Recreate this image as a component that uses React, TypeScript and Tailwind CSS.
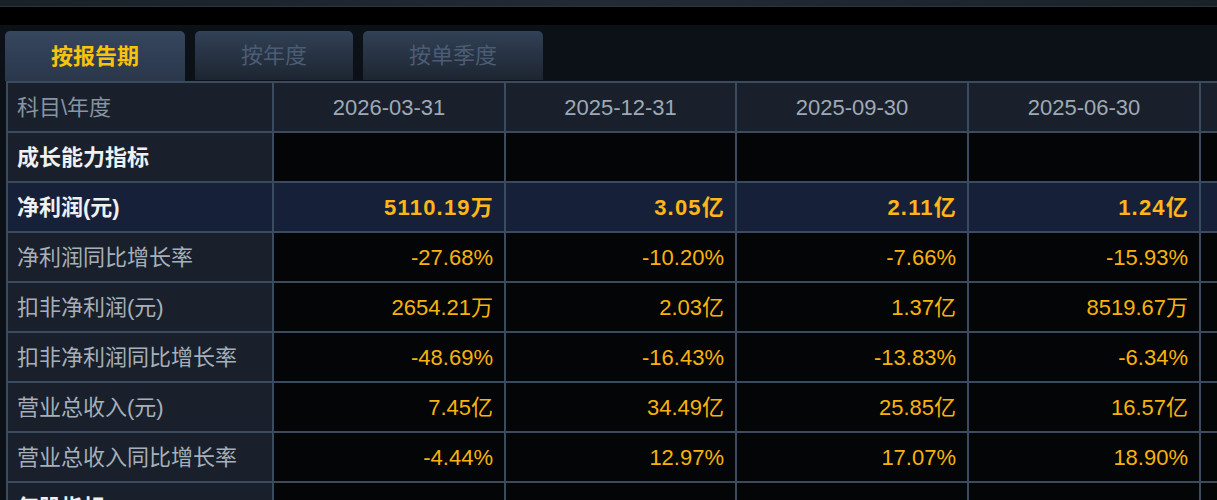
import React from "react";

const cols = [232, 231, 232, 232, 232];
const dates = ["2026-03-31", "2025-12-31", "2025-09-30", "2025-06-30", ""];

type Row = { label: string; kind: "section" | "hl" | "normal"; vals: string[] };

const rows: Row[] = [
  { label: "成长能力指标", kind: "section", vals: ["", "", "", "", ""] },
  { label: "净利润(元)", kind: "hl", vals: ["5110.19万", "3.05亿", "2.11亿", "1.24亿", ""] },
  { label: "净利润同比增长率", kind: "normal", vals: ["-27.68%", "-10.20%", "-7.66%", "-15.93%", ""] },
  { label: "扣非净利润(元)", kind: "normal", vals: ["2654.21万", "2.03亿", "1.37亿", "8519.67万", ""] },
  { label: "扣非净利润同比增长率", kind: "normal", vals: ["-48.69%", "-16.43%", "-13.83%", "-6.34%", ""] },
  { label: "营业总收入(元)", kind: "normal", vals: ["7.45亿", "34.49亿", "25.85亿", "16.57亿", ""] },
  { label: "营业总收入同比增长率", kind: "normal", vals: ["-4.44%", "12.97%", "17.07%", "18.90%", ""] },
  { label: "每股指标", kind: "section", vals: ["", "", "", "", ""] },
];

const font = { fontFamily: '"Liberation Sans", "Noto Sans CJK SC", sans-serif' };

export default function App() {
  return (
    <div className="w-[1217px] h-[500px] overflow-hidden bg-[#0c1017]" style={font}>
      <div className="h-[7px] bg-gradient-to-r from-[#1a2028] via-[#232a34] to-[#1b2129] border-b border-[#2b3440]" />
      <div className="h-[18px] bg-black" />
      <div className="pt-[6px] pl-[5px] flex gap-[10px] h-[56px]">
        <div className="w-[180px] h-[50px] rounded-t-[5px] bg-gradient-to-b from-[#36465d] to-[#2a374b] flex items-center justify-center text-[22px] font-bold text-[#f8c30c]">
          按报告期
        </div>
        <div className="w-[158px] h-[49px] rounded-t-[5px] bg-gradient-to-b from-[#324156] to-[#1d2531] flex items-center justify-center text-[22px] text-[#4b5d74]">
          按年度
        </div>
        <div className="w-[180px] h-[49px] rounded-t-[5px] bg-gradient-to-b from-[#324156] to-[#1d2531] flex items-center justify-center text-[22px] text-[#4b5d74]">
          按单季度
        </div>
      </div>
      <div className="ml-[6px] w-[1300px] border-t-2 border-l-2 border-[#3a4a5f]">
        <div className="flex h-[50px] bg-[#19202b]">
          <div className="w-[266px] shrink-0 border-r-2 border-b-2 border-[#3a4a5f] flex items-center pl-[9px] text-[22px] text-[#8794a2]">
            科目\年度
          </div>
          {cols.map((w, i) => (
            <div
              key={i}
              style={{ width: w }}
              className="shrink-0 border-r-2 border-b-2 border-[#3a4a5f] flex items-center justify-center text-[22px] text-[#9ea9b5]"
            >
              {dates[i]}
            </div>
          ))}
        </div>
        {rows.map((r, ri) => {
          const hl = r.kind === "hl";
          const labelBg = hl ? "bg-[#172039]" : "bg-[#19202b]";
          const cellBg = hl ? "bg-[#172039]" : "bg-[#030507]";
          const labelText =
            r.kind === "normal" ? "text-[#a6b0ba] font-normal" : "text-[#eef0f2] font-bold";
          return (
            <div key={ri} className="flex h-[50px]">
              <div
                className={`w-[266px] shrink-0 border-r-2 border-b-2 border-[#3a4a5f] flex items-center pl-[9px] text-[22px] ${labelBg} ${labelText}`}
              >
                {r.label}
              </div>
              {cols.map((w, i) => (
                <div
                  key={i}
                  style={{ width: w }}
                  className={`shrink-0 border-r-2 border-b-2 border-[#3a4a5f] flex items-center justify-end text-[22px] ${cellBg} ${
                    hl ? "font-bold text-[#ffb616] tracking-[1.2px] pr-[10px]" : "text-[#f8b20c] pr-[11px]"
                  }`}
                >
                  {r.vals[i]}
                </div>
              ))}
            </div>
          );
        })}
      </div>
    </div>
  );
}
